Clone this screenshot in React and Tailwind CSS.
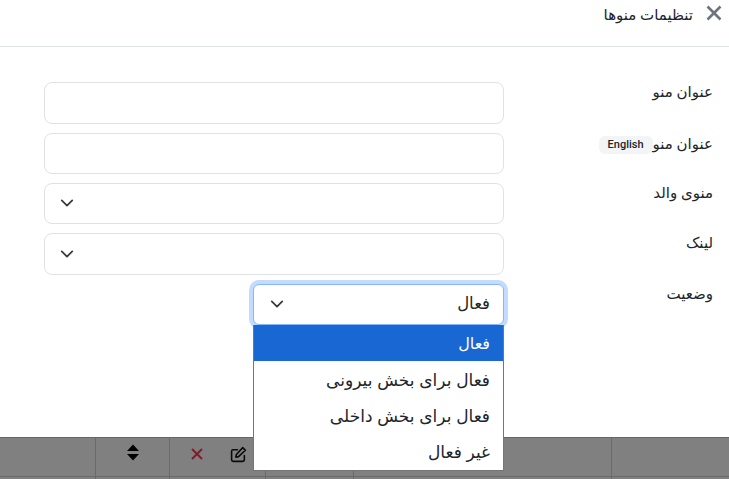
import React from 'react';

const fontStack = "font-['Roboto','DejaVu_Sans',sans-serif]";

const Chevron = () => (
  <svg width="14" height="14" viewBox="0 0 16 16" fill="none">
    <path d="M2 5l6 6 6-6" stroke="#343a40" strokeWidth="2" strokeLinecap="round" strokeLinejoin="round" />
  </svg>
);

const FormRow = ({ label, badge, children, width = 'w-[460px]' }) => (
  <div className="flex h-[41.4px] items-start">
    <label className="flex w-[225px] shrink-0 items-center pt-[1px] pr-[16px] text-[15px] leading-[18px] text-[#212529]">
      <span>{label}</span>
      {badge && (
        <span className="mt-[2px] rounded-[6px] bg-[#f3f4f6] px-[9px] py-[2px] text-[11px] leading-[14px] font-medium text-[#212529]">
          {badge}
        </span>
      )}
    </label>
    <div className={`${width} h-full`}>{children}</div>
  </div>
);

const Field = () => <div className="h-full w-full rounded-[8px] border border-[#dee2e6] bg-white" />;

const SelectField = () => (
  <div className="flex h-full w-full items-center justify-end rounded-[8px] border border-[#dee2e6] bg-white pb-[1px] pl-[15px]">
    <Chevron />
  </div>
);

const options = ['فعال', 'فعال برای بخش بیرونی', 'فعال برای بخش داخلی', 'غیر فعال'];

export default function App() {
  return (
    <div dir="rtl" className={`${fontStack} relative flex h-[479px] w-[729px] flex-col overflow-hidden bg-white`}>
      <header className="flex h-[47px] shrink-0 items-start border-b border-[#dee2e6] pt-[5px] pr-[7px]">
        <svg width="16" height="16" viewBox="0 0 16 16" fill="none">
          <path d="M1.5 1.5l13 13M14.5 1.5l-13 13" stroke="#6c757d" strokeWidth="2.6" />
        </svg>
        <h2 className="mr-[13px] text-[15px] leading-[20px] text-[#212529]">تنظیمات منوها</h2>
      </header>

      <main className="flex grow flex-col gap-[9px] pt-[35.2px]">
        <FormRow label="عنوان منو"><Field /></FormRow>
        <FormRow label="عنوان منو" badge="English"><Field /></FormRow>
        <FormRow label="منوی والد"><SelectField /></FormRow>
        <FormRow label="لینک"><SelectField /></FormRow>
        <FormRow label="وضعیت" width="w-[251px]">
          <div className="flex h-full w-full items-center justify-between rounded-[6px] border border-[#86b7fe] bg-white pr-[13px] pl-[16px] text-[16.5px] text-[#212529] shadow-[0_0_0_4px_#c2dbfe]">
            <span>فعال</span>
            <Chevron />
          </div>
        </FormRow>
      </main>

      <footer dir="ltr" className="relative flex h-[42px] shrink-0 border-t border-[#676767] bg-[#808080]">
        <div className="w-[96px] border-r border-[#6a6a6a]" />
        <div className="flex h-full w-[74px] items-start justify-center border-r border-[#6a6a6a] pt-[6px]">
          <svg width="14" height="17" viewBox="0 0 14 17">
            <path d="M7 0.5L13 7H1z" fill="#000" />
            <path d="M7 16.5L13 10H1z" fill="#000" />
          </svg>
        </div>
        <div className="flex h-full w-[96px] items-start border-r border-[#6a6a6a] pt-[9px] pl-[20px]">
          <svg width="14" height="14" viewBox="0 0 14 14" fill="none">
            <path d="M2 2l10 10M12 2L2 12" stroke="#7f1d2a" strokeWidth="2" />
          </svg>
          <svg className="mt-[-1px] ml-[26px]" width="17" height="17" viewBox="0 0 16 16" fill="none" stroke="#0a0a0a" strokeWidth="1.5">
            <path d="M13.5 9v4a1.5 1.5 0 0 1-1.5 1.5H3A1.5 1.5 0 0 1 1.500 13V5A1.500 1.500 0 0 1 3 3.500h4" strokeLinecap="round" />
            <path d="M5.500 10.500l.5-2.500 6-6.500 2.500 2.500-6.500 6z" strokeLinejoin="round" />
          </svg>
        </div>
        <div className="h-full w-[88px] border-r border-[#6a6a6a]" />
        <div className="h-full w-[258px] border-r border-[#6a6a6a]" />
        <div className="absolute inset-x-0 bottom-0 h-[3px] border-t border-[#6a6a6a]" />
      </footer>

      {/* open select list sits over the footer */}
      <ul className="absolute top-[325px] left-[253px] w-[251px] border border-t-0 border-[#767676] bg-white text-[17px] text-[#212529] [word-spacing:0.5px]">
        {options.map((opt, i) => (
          <li
            key={opt}
            className={`flex h-[36.25px] items-center pt-[2px] pr-[13px] ${i === 0 ? 'bg-[#1967d2] text-[16px] font-medium text-white' : ''}`}
          >
            {opt}
          </li>
        ))}
      </ul>
    </div>
  );
}
